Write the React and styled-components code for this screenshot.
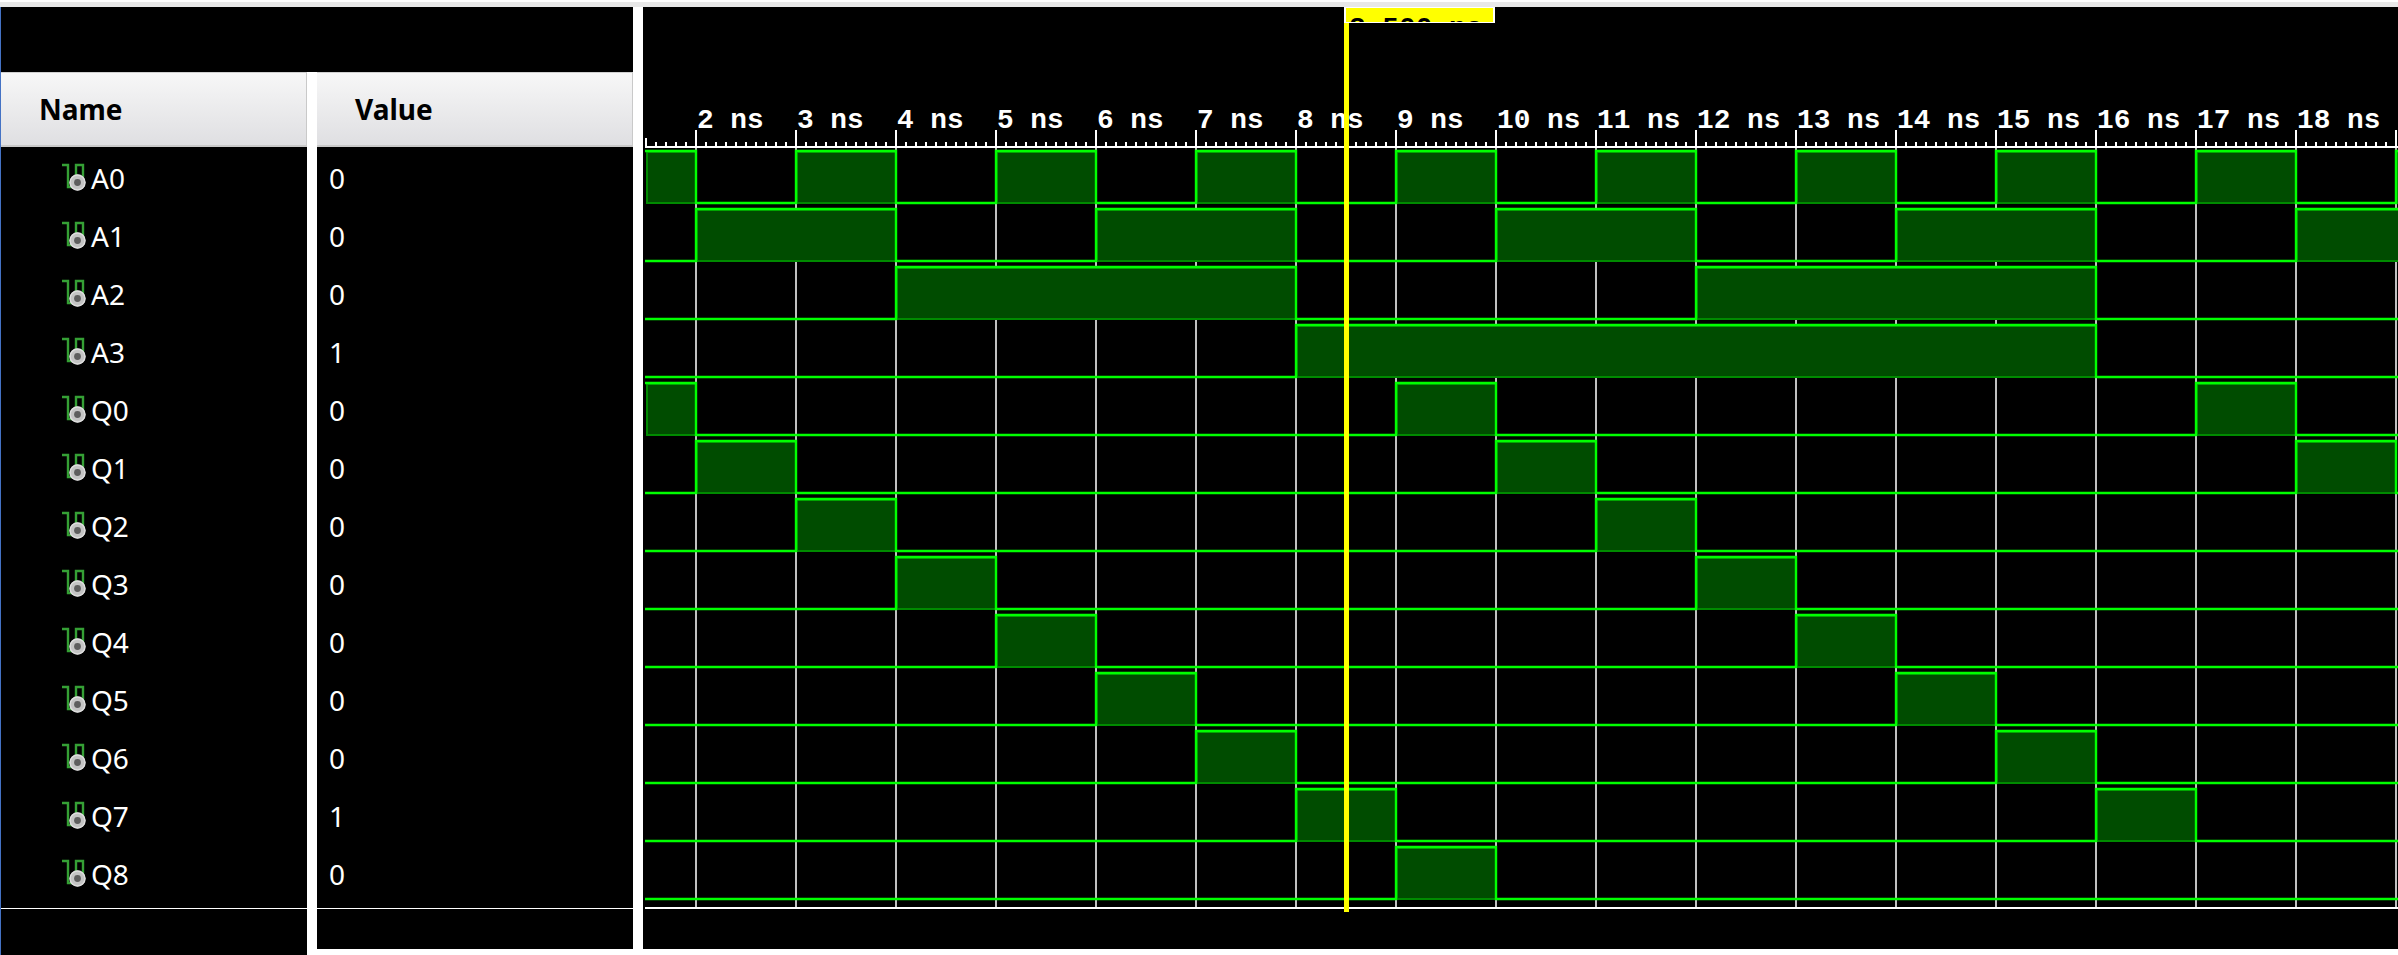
import React from "react";
import styled, { createGlobalStyle } from "styled-components";

const Global = createGlobalStyle`
  html, body { margin: 0; padding: 0; background: #fff; overflow: hidden; }
  #root { width: 2398px; height: 955px; }
`;

const Page = styled.div`
  width: 2398px;
  height: 955px;
  display: flex;
  flex-direction: column;
  background: #fff;
  font-family: "Noto Sans", "Open Sans", sans-serif;
  overflow: hidden;
`;
const TopStrip = styled.div`
  height: 5px;
  flex: none;
  border-top: 2px solid #fff;
  background: #e8e8e8;
`;
const Body = styled.div`
  flex: 1;
  display: flex;
  min-height: 0;
`;
const LeftPane = styled.div`
  width: 633px;
  flex: none;
  display: flex;
  flex-direction: column;
  border-left: 1px solid #4472c4;
  box-sizing: border-box;
`;
const LeftTop = styled.div`
  height: 65px;
  flex: none;
  background: #000;
`;
const Columns = styled.div`
  flex: 1;
  display: flex;
  gap: 10px;
  background: #fff;
  min-height: 0;
`;
const Column = styled.div`
  width: ${(p) => p.$width}px;
  flex: none;
  display: flex;
  flex-direction: column;
`;
const HeaderCell = styled.div`
  height: 75px;
  flex: none;
  box-sizing: border-box;
  display: flex;
  align-items: center;
  padding-left: ${(p) => p.$pad}px;
  background: linear-gradient(#f7f7f7, #dfdfe2);
  border-top: 1px solid #d0d0d0;
  border-bottom: 2px solid #c9c9c9;
  border-right: 1px solid #c9c9c9;
  color: #000;
  font-weight: 700;
  font-size: 28px;
`;
const RowList = styled.div`
  height: 762px;
  flex: none;
  box-sizing: border-box;
  padding-top: 2px;
  background: #000;
  border-bottom: 1px solid #fff;
`;
const Row = styled.div`
  height: 58px;
  display: flex;
  align-items: center;
  color: #fff;
  font-size: 28px;
  padding-left: ${(p) => p.$pad}px;
`;
const SignalIcon = styled.svg`
  width: 28px;
  height: 30px;
  flex: none;
  margin-right: 2px;
`;
const Footer = styled.div`
  height: ${(p) => p.$height}px;
  flex: none;
  background: #000;
`;
const Divider = styled.div`
  width: 10px;
  flex: none;
  background: #fff;
`;
const WavePane = styled.div`
  position: relative;
  width: 1755px;
  height: 942px;
  flex: none;
  background: #000;
`;
const Wave = styled.svg`
  display: block;
`;
const Flag = styled.div`
  position: absolute;
  left: 701px;
  top: 0;
  width: 151px;
  height: 16px;
  box-sizing: border-box;
  background: #ff0;
  border: 2px solid #fff;
  border-width: 1px 2px;
  overflow: hidden;
  color: #000;
  font: 700 27.8px/1 "Liberation Mono", monospace;
  white-space: pre;
  padding: 7px 0 0 3px;
`;
const TickLabel = styled.text`
  font: 700 27.8px "Liberation Mono", monospace;
  fill: #fff;
`;

const NAMES = ["A0","A1","A2","A3","Q0","Q1","Q2","Q3","Q4","Q5","Q6","Q7","Q8"];
const VALUES = ["0","0","0","1","0","0","0","0","0","0","0","1","0"];
const END = 21;
const HIGH = [
  [[1.5,2],[3,4],[5,6],[7,8],[9,10],[11,12],[13,14],[15,16],[17,18],[19,END]],
  [[2,4],[6,8],[10,12],[14,16],[18,END]],
  [[4,8],[12,16]],
  [[8,16]],
  [[1.5,2],[9,10],[17,18]],
  [[2,3],[10,11],[18,19]],
  [[3,4],[11,12]],
  [[4,5],[12,13]],
  [[5,6],[13,14]],
  [[6,7],[14,15]],
  [[7,8],[15,16]],
  [[8,9],[16,17]],
  [[9,10]],
];
const tx = (t) => 496 + t * 100;
const START = 1.5;
const MAJOR = Array.from({ length: 18 }, (_, i) => i + 2);
const MINOR = Array.from({ length: 176 }, (_, i) => 656 + i * 10).filter((x) => (x - 696) % 100 !== 0);

function signalPath(runs, top, low) {
  let d = "";
  let x = 645;
  if (runs[0][0] === START) {
    d = `M645 ${top}`;
  } else {
    d = `M645 ${low}`;
  }
  runs.forEach(([a, b], i) => {
    const xa = tx(a), xb = tx(b);
    if (a !== START) d += ` H${xa} V${top}`;
    if (b >= END) { d += " H2398"; x = 2398; }
    else { d += ` H${xb} V${low}`; x = xb; }
  });
  if (x < 2398) d += " H2398";
  return d;
}

function SignalRow({ runs, index }) {
  const top = 151 + index * 58;
  const low = 203 + index * 58;
  return (
    <g>
      {runs.map(([a, b]) => (
        <rect key={a} x={tx(a) + 1} y={top + 1} width={Math.min(tx(b), 2420) - tx(a) - 1} height={low - top - 1}
          fill="#004c00" stroke="#008a00" strokeWidth="2" />
      ))}
      <path d={signalPath(runs, top, low)} fill="none" stroke="#00ff00" strokeWidth="2.4" />
    </g>
  );
}

function PortIcon() {
  return (
    <SignalIcon viewBox="0 0 28 30">
      <path d="M1 2H7V24H15V2H22V20" fill="none" stroke="#35a035" strokeWidth="2.4" />
      <circle cx="16.5" cy="19.5" r="8" fill="#c4c4c4" />
      <circle cx="16.5" cy="19.5" r="7.5" fill="none" stroke="#dedede" strokeWidth="1.4" />
      <circle cx="16.5" cy="19.5" r="3.4" fill="#5e5e5e" />
    </SignalIcon>
  );
}

export default function App() {
  return (
    <Page>
      <Global />
      <TopStrip />
      <Body>
        <LeftPane>
          <LeftTop />
          <Columns>
            <Column $width={306}>
              <HeaderCell $pad={38}>Name</HeaderCell>
              <RowList>
                {NAMES.map((n) => (
                  <Row key={n} $pad={60}><PortIcon />{n}</Row>
                ))}
              </RowList>
              <Footer $height={46} />
            </Column>
            <Column $width={316}>
              <HeaderCell $pad={38}>Value</HeaderCell>
              <RowList>
                {VALUES.map((v, i) => (
                  <Row key={NAMES[i]} $pad={12}>{v}</Row>
                ))}
              </RowList>
              <Footer $height={40} />
            </Column>
          </Columns>
        </LeftPane>
        <Divider />
        <WavePane>
          <Wave width="1755" height="942" viewBox="643 7 1755 942">
            {MAJOR.map((t) => (
              <rect key={t} x={tx(t) - 1} y="148" width="2" height="759" fill="#c0c0c0" />
            ))}
            <rect x="645" y="146" width="1753" height="2" fill="#fff" />
            <rect x="645" y="138" width="2" height="9" fill="#fff" />
            {MINOR.map((x) => (
              <rect key={x} x={x - 1} y="142" width="2" height="4" fill="#fff" />
            ))}
            {MAJOR.map((t) => (
              <rect key={t} x={tx(t) - 1} y="130" width="2" height="17" fill="#fff" />
            ))}
            {MAJOR.slice(0, 17).map((t) => (
              <TickLabel key={t} x={tx(t) + 1} y="128">{`${t} ns`}</TickLabel>
            ))}
            {HIGH.map((runs, i) => (
              <SignalRow key={NAMES[i]} runs={runs} index={i} />
            ))}
            <rect x="645" y="907" width="1753" height="2" fill="#fff" />
            <rect x="1344" y="23" width="5" height="889" fill="#ff0" />
          </Wave>
          <Flag>8.500 ns</Flag>
        </WavePane>
      </Body>
    </Page>
  );
}
